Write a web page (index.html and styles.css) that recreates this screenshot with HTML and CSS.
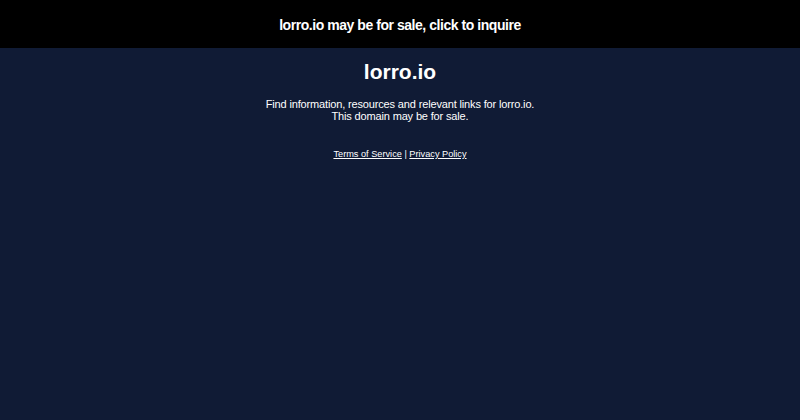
FILE: index.html
```html
<!DOCTYPE html>
<html>
    <head>
        <title>lorro.io</title>
        <link rel="stylesheet" href="styles.css">
    </head>
    <body>
        <a class="sale-banner" href="#">lorro.io may be for sale, click to inquire</a>

        <div class="container">
            <h1>lorro.io</h1>
            <p class="description">
                Find information, resources and relevant links for lorro.io.<br>
                This domain may be for sale.
            </p>

            <div class="footer">
                <a href="#">Terms of Service</a> | <a href="#">Privacy Policy</a>
            </div>
        </div>
    </body>
</html>
```

FILE: styles.css
```css
:root {
    --bg-primary: #101b35;
    --bg-banner: #000000;
    --text-primary: #ffffff;
}

body {
    font-family: 'Liberation Sans', Arial, sans-serif;
    margin: 0;
    padding: 0;
    background-color: var(--bg-primary);
    color: var(--text-primary);
}

.sale-banner {
    display: flex;
    align-items: center;
    justify-content: center;
    box-sizing: border-box;
    height: 48px;
    padding-top: 2px;
    background-color: var(--bg-banner);
    color: var(--text-primary);
    font-size: 14px;
    letter-spacing: -0.45px;
    font-weight: bold;
    text-decoration: none;
}

.container {
    display: flex;
    flex-direction: column;
    align-items: center;
    text-align: center;
    padding-top: 10px;
}

h1 {
    margin: 0;
    font-size: 21px;
    line-height: 28px;
    font-weight: bold;
}

.description {
    margin: 12px 0 0 0;
    font-size: 11px;
    letter-spacing: -0.15px;
    line-height: 12px;
}

.footer {
    margin-top: 26px;
    font-size: 9.2px;
    line-height: 12px;
}

.footer a {
    color: var(--text-primary);
}
```
